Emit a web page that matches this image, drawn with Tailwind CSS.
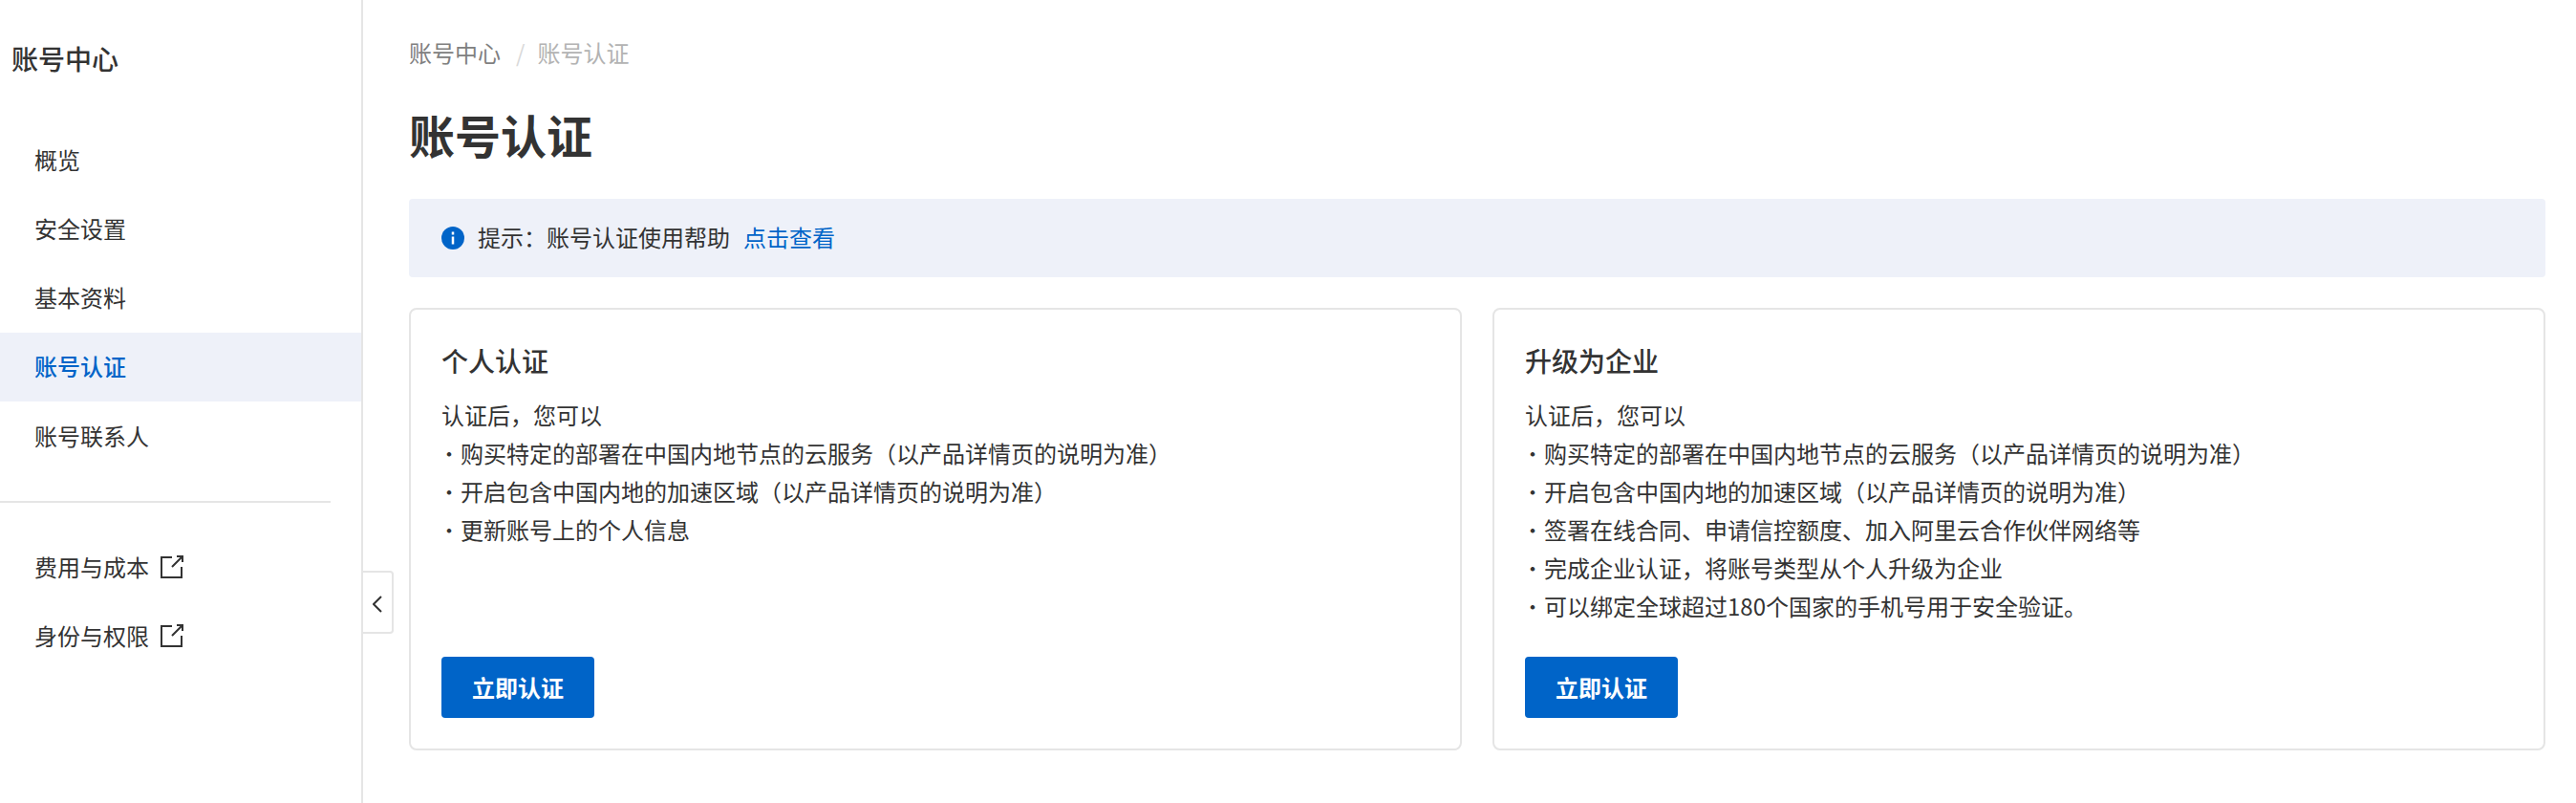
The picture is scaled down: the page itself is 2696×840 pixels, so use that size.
<!DOCTYPE html>
<html lang="zh-CN">
<head>
    <meta charset="UTF-8">
    <title>账号认证</title>
    <script src="https://cdn.jsdelivr.net/npm/@tailwindcss/browser@4"></script>
</head>
<body class="bg-white text-[#333] font-['Noto_Sans_CJK_SC','Noto_Sans',sans-serif]">
    <div class="flex h-[840px] w-[2696px] overflow-hidden">
        <!-- sidebar -->
        <aside class="relative w-[380px] shrink-0 border-r-2 border-[#e5e5e5]">
            <h1 class="pl-3 pt-[41px] text-[28px] leading-[40px] font-medium">账号中心</h1>
            <nav class="mt-[51px] text-[24px]">
                <a href="#" class="flex h-[72px] items-center pl-9 pb-[2px]">概览</a>
                <a href="#" class="flex h-[72px] items-center pl-9 pb-[2px]">安全设置</a>
                <a href="#" class="flex h-[72px] items-center pl-9 pb-[2px]">基本资料</a>
                <a href="#" class="flex h-[72px] items-center pl-9 pb-[2px] bg-[#eef1f9] text-[#0064c8] font-medium">账号认证</a>
                <a href="#" class="flex h-[72px] items-center pl-9">账号联系人</a>
            </nav>
            <div class="mt-[32px] mr-[32px] h-[2px] bg-[#e5e5e5]"></div>
            <nav class="mt-[32px] text-[24px]">
                <a href="#" class="flex h-[72px] items-center gap-3 pl-9 pb-[2px]">
                    费用与成本
                    <svg class="w-6 h-6" viewBox="0 0 24 24" fill="none" stroke="#333" stroke-width="2"><path d="M12 2H1v21h21V12"/><path d="M12 12 23 1M17 1h6v6"/></svg>
                </a>
                <a href="#" class="flex h-[72px] items-center gap-3 pl-9 pb-[2px]">
                    身份与权限
                    <svg class="w-6 h-6" viewBox="0 0 24 24" fill="none" stroke="#333" stroke-width="2"><path d="M12 2H1v21h21V12"/><path d="M12 12 23 1M17 1h6v6"/></svg>
                </a>
            </nav>
            <button class="absolute top-[597px] left-[380px] flex h-[66px] w-[32px] items-center justify-center rounded-r-[4px] border-2 border-l-0 border-[#e5e5e5] bg-white">
                <svg class="mt-1 w-[10px] h-[18px]" viewBox="0 0 10 18" fill="none" stroke="#333" stroke-width="2"><path d="M9 1 1 9l8 8"/></svg>
            </button>
        </aside>

        <!-- main -->
        <main class="flex-1 pl-[48px] pr-[32px]">
            <div class="flex items-center pt-[37px] pb-[1px] text-[24px] leading-[36px] text-[#808080]">
                <a href="#">账号中心</a>
                <span class="ml-4 mr-[13px] text-[#d9d9d9]">/</span>
                <span class="text-[#b3b3b3]">账号认证</span>
            </div>
            <h2 class="mt-[30px] text-[48px] leading-[72px] font-semibold">账号认证</h2>
            <div class="mt-[32px] flex h-[82px] items-center rounded-[4px] bg-[#eef1f9] pl-[34px] text-[24px]">
                <svg class="w-6 h-6 mr-[14px]" viewBox="0 0 24 24"><circle cx="12" cy="12" r="12" fill="#0064c8"/><path d="M12 5.500v3M12 10.500v8" stroke="#fff" stroke-width="2.500"/></svg>
                <span class="pb-[2px]">提示：账号认证使用帮助</span>
                <a href="#" class="ml-[14px] pb-[2px] text-[#0064c8]">点击查看</a>
            </div>
            <div class="mt-[32px] grid h-[463px] grid-cols-2 gap-8">
                <section class="flex flex-col rounded-[8px] border-2 border-[#e5e5e5] px-8 pt-[32px] pb-[32px]">
                    <h3 class="text-[28px] leading-[42px] font-medium">个人认证</h3>
                    <div class="mt-[16px] text-[24px] leading-[40px]">
                        <p>认证后，您可以</p>
                        <p class="flex"><span class="w-5 shrink-0 -translate-x-1 font-light">·</span>购买特定的部署在中国内地节点的云服务（以产品详情页的说明为准）</p>
                        <p class="flex"><span class="w-5 shrink-0 -translate-x-1 font-light">·</span>开启包含中国内地的加速区域（以产品详情页的说明为准）</p>
                        <p class="flex"><span class="w-5 shrink-0 -translate-x-1 font-light">·</span>更新账号上的个人信息</p>
                    </div>
                    <button class="mt-auto h-16 w-40 rounded-[4px] bg-[#0064c8] text-[24px] font-semibold text-white">立即认证</button>
                </section>
                <section class="flex flex-col rounded-[8px] border-2 border-[#e5e5e5] px-8 pt-[32px] pb-[32px]">
                    <h3 class="text-[28px] leading-[42px] font-medium">升级为企业</h3>
                    <div class="mt-[16px] text-[24px] leading-[40px]">
                        <p>认证后，您可以</p>
                        <p class="flex"><span class="w-5 shrink-0 -translate-x-1 font-light">·</span>购买特定的部署在中国内地节点的云服务（以产品详情页的说明为准）</p>
                        <p class="flex"><span class="w-5 shrink-0 -translate-x-1 font-light">·</span>开启包含中国内地的加速区域（以产品详情页的说明为准）</p>
                        <p class="flex"><span class="w-5 shrink-0 -translate-x-1 font-light">·</span>签署在线合同、申请信控额度、加入阿里云合作伙伴网络等</p>
                        <p class="flex"><span class="w-5 shrink-0 -translate-x-1 font-light">·</span>完成企业认证，将账号类型从个人升级为企业</p>
                        <p class="flex"><span class="w-5 shrink-0 -translate-x-1 font-light">·</span>可以绑定全球超过180个国家的手机号用于安全验证。</p>
                    </div>
                    <button class="mt-auto h-16 w-40 rounded-[4px] bg-[#0064c8] text-[24px] font-semibold text-white">立即认证</button>
                </section>
            </div>
        </main>
    </div>
</body>
</html>
